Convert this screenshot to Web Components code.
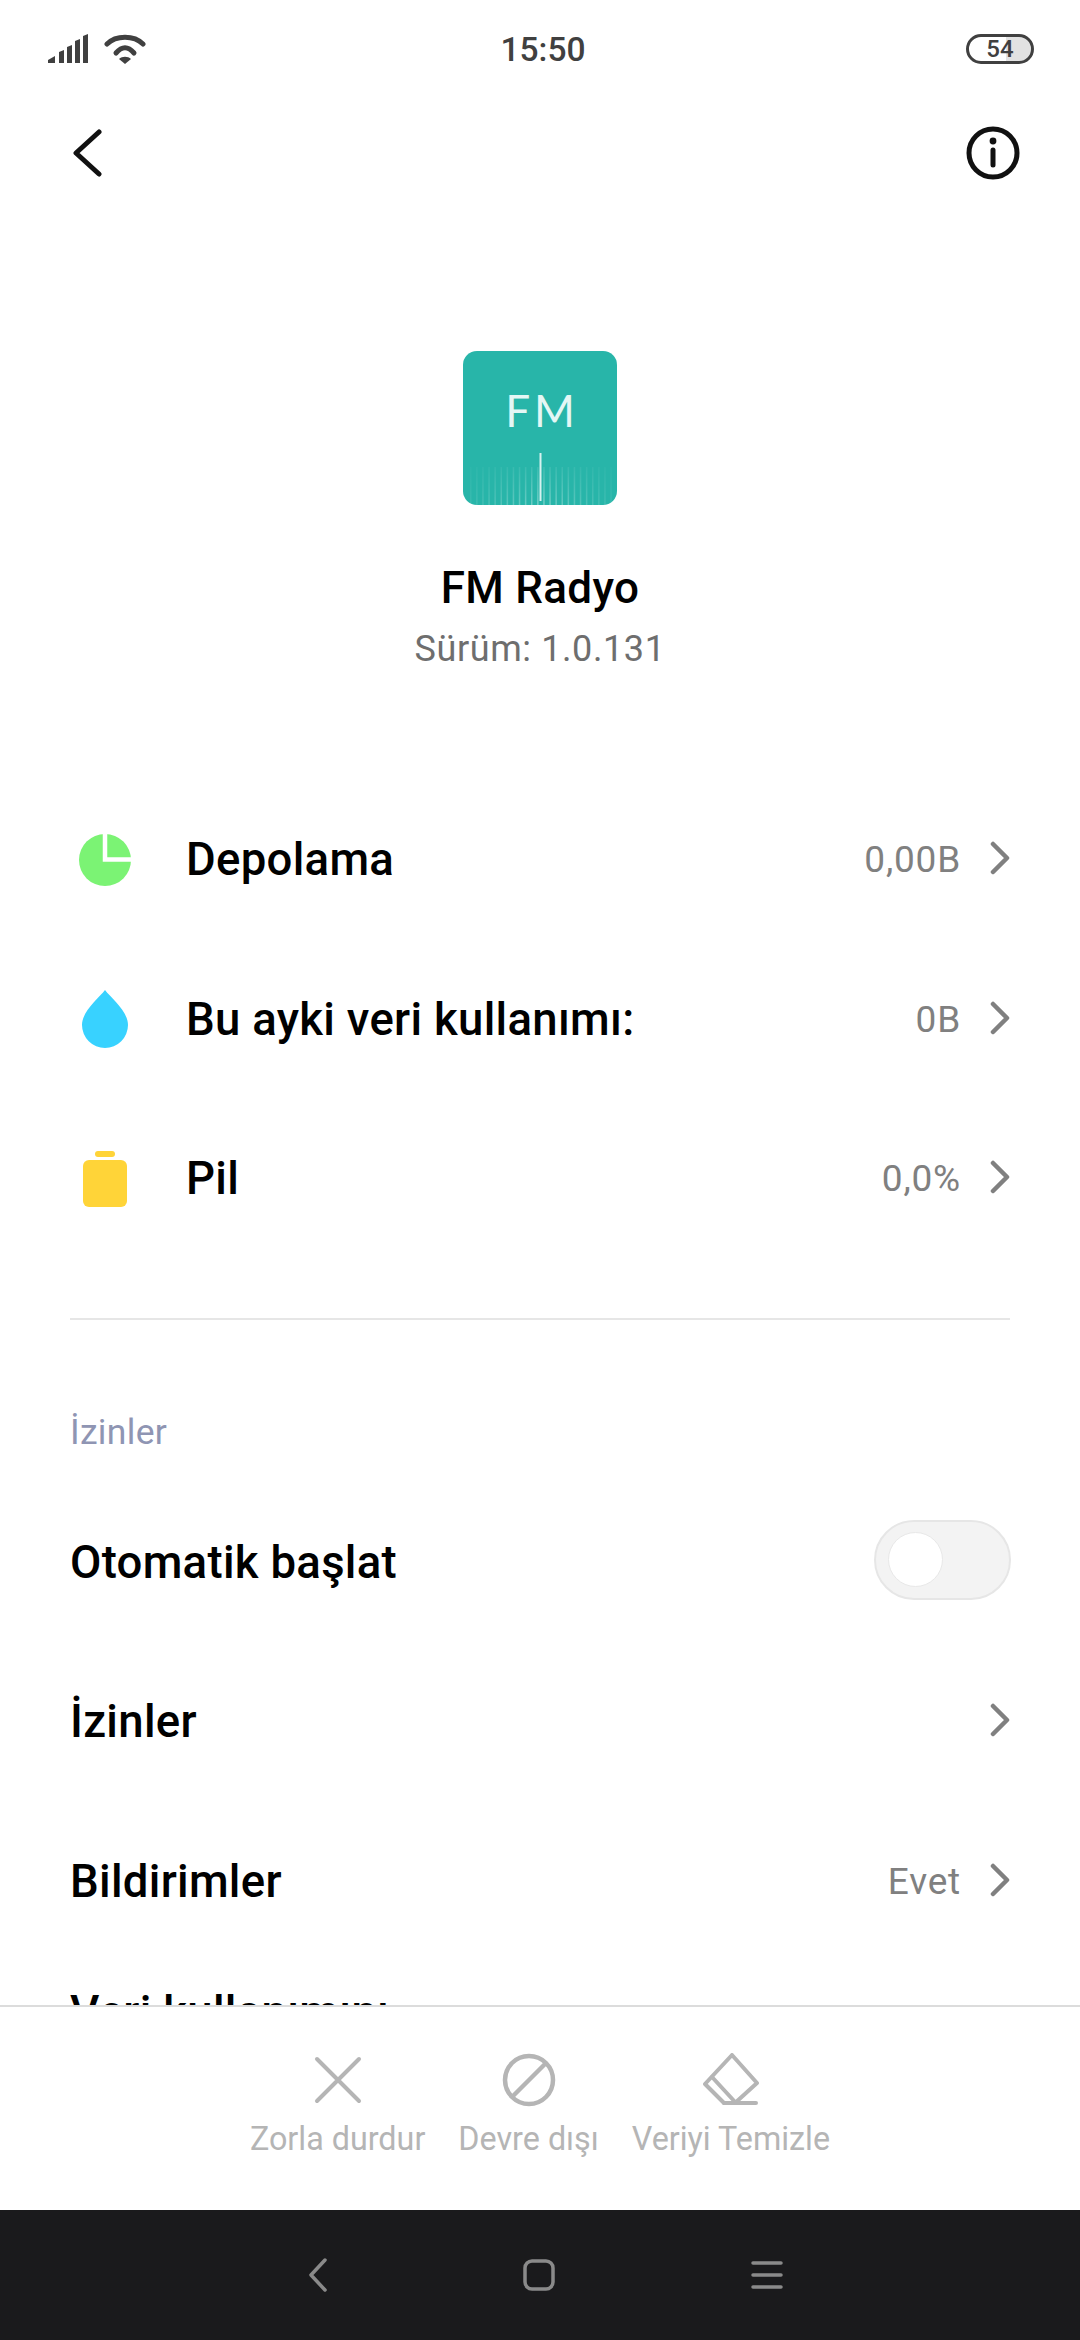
<!DOCTYPE html>
<html lang="tr">
<head>
<meta charset="utf-8">
<title>FM Radyo</title>
<style>
  html, body { margin: 0; padding: 0; background: #fff; }
  body { font-family: Roboto, "Noto Sans", sans-serif; width: 1080px; height: 2340px; overflow: hidden; }
</style>
</head>
<body>
<app-screen>
  <status-bar time="15:50" level="54"></status-bar>
  <top-bar></top-bar>
  <app-hero name="FM Radyo" version="Sürüm: 1.0.131"></app-hero>
  <usage-list>
    <info-row icon="pie" label="Depolama" value="0,00B" chevron></info-row>
    <info-row icon="drop" label="Bu ayki veri kullanımı:" value="0B" chevron></info-row>
    <info-row icon="battery" label="Pil" value="0,0%" chevron></info-row>
  </usage-list>
  <section-title>İzinler</section-title>
  <info-row label="Otomatik başlat"><toggle-switch></toggle-switch></info-row>
  <info-row label="İzinler" chevron></info-row>
  <info-row label="Bildirimler" value="Evet" chevron></info-row>
  <info-row label="Veri kullanımını" top></info-row>
  <action-bar slot="footer">
    <action-item label="Zorla durdur" icon="close"></action-item>
    <action-item label="Devre dışı" icon="block"></action-item>
    <action-item label="Veriyi Temizle" icon="erase"></action-item>
  </action-bar>
  <nav-bar slot="footer"></nav-bar>
</app-screen>

<script>
const icons = {
  pie: `<svg width="52" height="52" viewBox="0 0 52 52"><circle cx="26" cy="26" r="26" fill="#7bf374"/><path d="M26 -1V25.5H53" fill="none" stroke="#fff" stroke-width="4.5"/></svg>`,
  drop: `<svg width="46" height="58" viewBox="0 0 46 58"><path d="M23 0C17 8 0 21 0 35a23 23 0 0 0 46 0C46 21 29 8 23 0z" fill="#38d2ff"/></svg>`,
  battery: `<svg width="44" height="56" viewBox="0 0 44 56"><rect x="12" y="0" width="20" height="6" rx="3" fill="#ffd438"/><rect x="0" y="9" width="44" height="47" rx="6" fill="#ffd438"/></svg>`,
  close: `<svg width="54" height="54" viewBox="0 0 54 54" fill="none" stroke="#b5b5b5" stroke-width="4" stroke-linecap="round"><path d="M6 6l42 42M48 6L6 48"/></svg>`,
  block: `<svg width="54" height="54" viewBox="0 0 54 54" fill="none" stroke="#b5b5b5" stroke-width="4.5"><circle cx="27" cy="27" r="24"/><path d="M10 44L44 10"/></svg>`,
  erase: `<svg width="56" height="54" viewBox="0 0 56 54" fill="none" stroke="#b5b5b5" stroke-width="4" stroke-linejoin="round" stroke-linecap="round"><path d="M29 2l25 28-22 20H21L2 31z"/><path d="M9 24l24 26M21 50h32" /></svg>`
};

class AppScreen extends HTMLElement {
  constructor() {
    super();
    this.attachShadow({ mode: "open" });
    this.shadowRoot.innerHTML = `
      <style>
        :host { display: flex; flex-direction: column; width: 1080px; height: 2340px; background: #fff; overflow: hidden; }
        .scroll { flex: 1; min-height: 0; overflow: hidden; }
      </style>
      <div class="scroll"><slot></slot></div>
      <slot name="footer"></slot>`;
  }
}

class StatusBar extends HTMLElement {
  constructor() {
    super();
    this.attachShadow({ mode: "open" });
  }
  connectedCallback() {
    this.shadowRoot.innerHTML = `
      <style>
        :host { display: grid; grid-template-columns: 1fr auto 1fr; align-items: center; height: 98px; padding: 0 46px 0 48px; box-sizing: border-box; color: #404040; }
        .left { display: flex; align-items: center; gap: 16px; }
        .time { font: 500 33.5px Roboto, sans-serif; margin-left: 4px; }
        .right { justify-self: end; }
        .batt { display: flex; align-items: center; justify-content: center; box-sizing: border-box; width: 68px; height: 30px; border: 3px solid #404040; border-radius: 15px; font: 500 24px Roboto, sans-serif; background: linear-gradient(90deg, #fff 60%, #e2e2e2 60%); background-clip: padding-box; }
      </style>
      <div class="left">
        <svg width="40" height="30" viewBox="0 0 40 30" fill="#404040">
          <path d="M0 29v-3l7-4v7zM11 29V18l5-2v13zM19 29V13l5-2v18zM27 29V7l5-2v24zM35 29V2l5-2v29z"/>
        </svg>
        <svg width="42" height="30" viewBox="0 0 42 30" fill="none" stroke="#404040" stroke-width="5" stroke-linecap="round">
          <path d="M3 10C12 1 30 1 39 10"/><path d="M12 19C18 12 24 12 30 19"/>
          <path d="M21 30l-6-5c3-3 9-3 12 0z" fill="#404040" stroke="none"/>
        </svg>
      </div>
      <div class="time">${this.getAttribute("time")}</div>
      <div class="right"><div class="batt">${this.getAttribute("level")}</div></div>`;
  }
}

class TopBar extends HTMLElement {
  constructor() {
    super();
    this.attachShadow({ mode: "open" });
    this.shadowRoot.innerHTML = `
      <style>
        :host { display: flex; justify-content: space-between; align-items: center; height: 110px; padding: 0 60px 0 72px; }
        svg { display: block; }
      </style>
      <svg width="30" height="48" viewBox="0 0 30 48" fill="none" stroke="#111" stroke-width="5" stroke-linecap="round" stroke-linejoin="round"><path d="M27 3L4 24l23 21"/></svg>
      <svg width="54" height="54" viewBox="0 0 54 54" fill="none" stroke="#111" stroke-width="5"><circle cx="27" cy="27" r="24"/><path d="M27 24v15" stroke-linecap="round"/><circle cx="27" cy="15" r="3.4" fill="#111" stroke="none"/></svg>`;
  }
}

class AppHero extends HTMLElement {
  constructor() {
    super();
    this.attachShadow({ mode: "open" });
  }
  connectedCallback() {
    let ticks = "";
    for (let x = 7; x < 150; x += 6.1) {
      const edge = 1 - Math.abs(x - 77) / 90;
      ticks += `<rect x="${x}" y="116" width="1.5" height="38" fill="url(#fade)" opacity="${edge.toFixed(2)}"/>`;
    }
    this.shadowRoot.innerHTML = `
      <style>
        :host { display: flex; flex-direction: column; align-items: center; padding-top: 143px; }
        svg { display: block; }
        h1 { margin: 58px 0 0; font: 500 44px/50px Roboto, sans-serif; letter-spacing: .3px; color: #000; }
        p { margin: 14px 0 0; font: 400 36px/44px Roboto, sans-serif; letter-spacing: .6px; color: #6e6e6e; }
      </style>
      <svg width="154" height="154" viewBox="0 0 154 154">
        <defs>
          <linearGradient id="fade" x1="0" y1="0" x2="0" y2="1">
            <stop offset="0" stop-color="#fff" stop-opacity=".1"/>
            <stop offset="1" stop-color="#fff" stop-opacity=".36"/>
          </linearGradient>
        </defs>
        <rect width="154" height="154" rx="14" fill="#28b5a9"/>
        ${ticks}
        <rect x="76.5" y="102" width="2" height="48" fill="#d6f2ef"/>
        <text x="79" y="76" text-anchor="middle" font-family="Lato" font-size="44" letter-spacing="4" fill="#e4f7f5">FM</text>
      </svg>
      <h1>${this.getAttribute("name")}</h1>
      <p>${this.getAttribute("version")}</p>`;
  }
}

class UsageList extends HTMLElement {
  constructor() {
    super();
    this.attachShadow({ mode: "open" });
    this.shadowRoot.innerHTML = `
      <style>
        :host { display: block; margin: 109px 70px 0; padding-bottom: 59px; border-bottom: 2px solid #e6e6e6; }
        .inner { margin: 0 -70px; }
      </style>
      <div class="inner"><slot></slot></div>`;
  }
}

class InfoRow extends HTMLElement {
  constructor() {
    super();
    this.attachShadow({ mode: "open" });
  }
  connectedCallback() {
    const icon = this.getAttribute("icon");
    const value = this.getAttribute("value");
    this.shadowRoot.innerHTML = `
      <style>
        :host { display: flex; align-items: center; height: 159.5px; padding: 0 69px 0 70px; box-sizing: border-box; }
        :host([top]) { align-items: flex-start; padding-top: 25px; }
        .icon { flex: none; width: 70px; margin-right: 46px; display: flex; justify-content: center; }
        .icon svg { display: block; }
        .label { flex: 1; font: 500 45.5px Roboto, sans-serif; letter-spacing: .3px; color: #000; }
        .value { font: 400 37px Roboto, sans-serif; letter-spacing: .8px; color: #808080; }
        .chev { display: block; margin: 0 0 3px 28px; flex: none; }
      </style>
      ${icon ? `<div class="icon">${icons[icon]}</div>` : ""}
      <div class="label">${this.getAttribute("label")}</div>
      ${value ? `<div class="value">${value}</div>` : ""}
      <slot></slot>
      ${this.hasAttribute("chevron") ? `<svg class="chev" width="22" height="34" viewBox="0 0 22 34" fill="none" stroke="#808080" stroke-width="4.5" stroke-linecap="round" stroke-linejoin="round"><path d="M4 3l14 14L4 31"/></svg>` : ""}`;
  }
}

class SectionTitle extends HTMLElement {
  constructor() {
    super();
    this.attachShadow({ mode: "open" });
    this.shadowRoot.innerHTML = `
      <style>
        :host { display: block; padding: 0 70px; margin-top: 92px; font: 400 35.5px/40px Roboto, sans-serif; letter-spacing: .3px; color: #8f95b3; margin-bottom: 31px; }
      </style>
      <slot></slot>`;
  }
}

class ToggleSwitch extends HTMLElement {
  constructor() {
    super();
    this.attachShadow({ mode: "open" });
    this.shadowRoot.innerHTML = `
      <style>
        :host { display: flex; align-items: center; box-sizing: border-box; width: 137px; height: 80px; margin-bottom: 5px; padding-left: 12px; background: #f3f3f3; border: 2px solid #e6e6e6; border-radius: 40px; }
        .thumb { width: 55px; height: 55px; box-sizing: border-box; background: #fff; border: 1px solid #e8e8e8; border-radius: 50%; }
      </style>
      <div class="thumb"></div>`;
  }
}

class ActionBar extends HTMLElement {
  constructor() {
    super();
    this.attachShadow({ mode: "open" });
    this.shadowRoot.innerHTML = `
      <style>
        :host { display: flex; justify-content: center; gap: 33px; height: 205px; padding-top: 46px; box-sizing: border-box; background: #fff; border-top: 2px solid #dcdcdc; position: relative; }
      </style>
      <slot></slot>`;
  }
}

class ActionItem extends HTMLElement {
  constructor() {
    super();
    this.attachShadow({ mode: "open" });
  }
  connectedCallback() {
    this.shadowRoot.innerHTML = `
      <style>
        :host { display: flex; flex-direction: column; align-items: center; }
        svg { display: block; }
        span { margin-top: 12px; font: 400 32.3px/40px Roboto, sans-serif; color: #b5b5b5; white-space: nowrap; }
      </style>
      ${icons[this.getAttribute("icon")]}
      <span>${this.getAttribute("label")}</span>`;
  }
}

class NavBar extends HTMLElement {
  constructor() {
    super();
    this.attachShadow({ mode: "open" });
    this.shadowRoot.innerHTML = `
      <style>
        :host { display: flex; align-items: center; justify-content: center; gap: 196px; height: 130px; background: #1a1a1c; padding-left: 12px; }
        svg { display: block; fill: none; stroke: #8a8a8a; stroke-width: 3.5; stroke-linecap: round; stroke-linejoin: round; }
      </style>
      <svg width="18" height="34" viewBox="0 0 18 34"><path d="M16 2L2 17l14 15"/></svg>
      <svg width="32" height="32" viewBox="0 0 32 32"><rect x="2" y="2" width="28" height="28" rx="7"/></svg>
      <svg width="32" height="32" viewBox="0 0 32 32"><path d="M2 4h28M2 16h28M2 28h28"/></svg>`;
  }
}

customElements.define("app-screen", AppScreen);
customElements.define("status-bar", StatusBar);
customElements.define("top-bar", TopBar);
customElements.define("app-hero", AppHero);
customElements.define("usage-list", UsageList);
customElements.define("info-row", InfoRow);
customElements.define("section-title", SectionTitle);
customElements.define("toggle-switch", ToggleSwitch);
customElements.define("action-bar", ActionBar);
customElements.define("action-item", ActionItem);
customElements.define("nav-bar", NavBar);
</script>
</body>
</html>
